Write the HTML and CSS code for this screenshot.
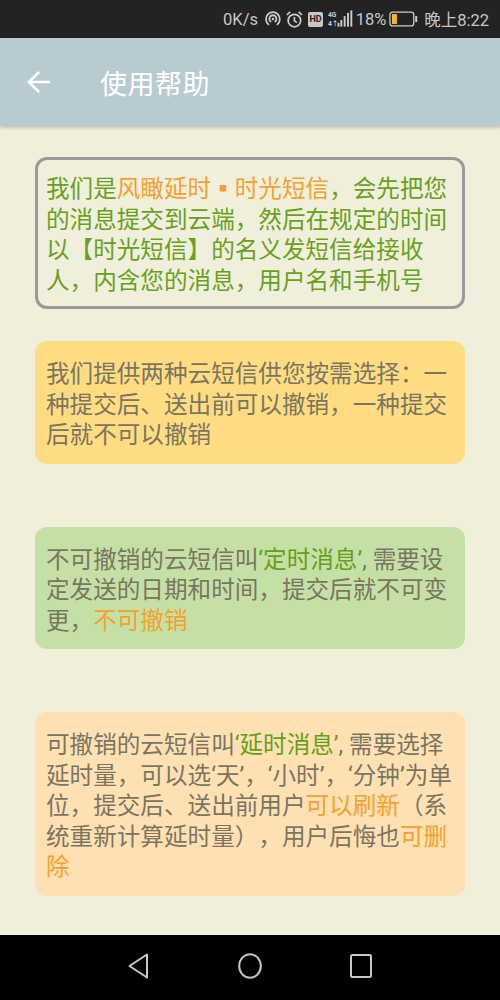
FILE: index.html
```html
<!DOCTYPE html>
<html lang="zh">
<head>
<meta charset="utf-8">
<title>使用帮助</title>
<link rel="stylesheet" href="styles.css">
</head>
<body>
<div class="screen">
  <header class="status">
    <span class="speed">0K/s</span>
    <svg class="ic-hotspot" viewBox="0 0 18 18"><path d="M4.5 14.5A7 7 0 1 1 13.5 14.5M6.6 11.5A3.6 3.6 0 1 1 11.4 11.5" fill="none" stroke="#ccc" stroke-width="1.8" stroke-linecap="round"/><circle cx="9" cy="9" r="1.3" fill="#ccc"/></svg>
    <svg class="ic-alarm" viewBox="0 0 18 18"><circle cx="9" cy="10" r="6" fill="none" stroke="#ccc" stroke-width="1.7"/><path d="M9 6.5V10.3L11.5 12M1.8 4.6L5 1.8M16.2 4.6L13 1.8" fill="none" stroke="#ccc" stroke-width="1.6"/></svg>
    <span class="hd">HD</span>
    <svg class="ic-signal" viewBox="0 0 26 20"><text x="0" y="7.5" class="sig-text">4G</text><text x="0" y="17" class="sig-text">4↑</text><rect x="10" y="14" width="2" height="4" fill="#ccc"/><rect x="13" y="11" width="2" height="7" fill="#ccc"/><rect x="16.5" y="7" width="2" height="11" fill="#ccc"/><rect x="20" y="3.500" width="2" height="14.500" fill="#ccc"/><rect x="23.500" y="1" width="2" height="17" fill="#ccc"/></svg>
    <span class="pct">18%</span>
    <svg class="ic-batt" viewBox="0 0 29 16"><rect x="1" y="1" width="24" height="14" rx="2.500" fill="none" stroke="#ccc" stroke-width="1.300"/><rect x="3" y="3" width="5" height="10" fill="#f5b921"/><rect x="26.500" y="5" width="2" height="6" fill="#ccc"/></svg>
    <span class="clock">晚上8:22</span>
  </header>
  <div class="appbar">
    <svg class="back" viewBox="0 0 24 24"><path d="M23 12H2.500M12 2L2 12L12 22" fill="none" stroke="#fff" stroke-width="2.500"/></svg>
    <h1 class="title">使用帮助</h1>
  </div>
  <main class="content">
    <section class="card card-intro">
      <p class="line">我们是<span class="orange">风瞰延时▪时光短信</span>，会先把您</p>
      <p class="line">的消息提交到云端，然后在规定的时间</p>
      <p class="line">以【时光短信】的名义发短信给接收</p>
      <p class="line">人，内含您的消息，用户名和手机号</p>
    </section>
    <section class="card card-yellow">
      <p class="line">我们提供两种云短信供您按需选择：一</p>
      <p class="line">种提交后、送出前可以撤销，一种提交</p>
      <p class="line">后就不可以撤销</p>
    </section>
    <section class="card card-green">
      <p class="line">不可撤销的云短信叫<span class="green">‘定时消息’</span>, 需要设</p>
      <p class="line">定发送的日期和时间，提交后就不可变</p>
      <p class="line">更，<span class="orange">不可撤销</span></p>
    </section>
    <section class="card card-peach">
      <p class="line">可撤销的云短信叫<span class="green">‘延时消息’</span>, 需要选择</p>
      <p class="line">延时量，可以选‘天’，‘小时’，‘分钟’为单</p>
      <p class="line">位，提交后、送出前用户<span class="orange">可以刷新</span>（系</p>
      <p class="line">统重新计算延时量），用户后悔也<span class="orange">可删</span></p>
      <p class="line"><span class="orange">除</span></p>
    </section>
  </main>
  <nav class="navbar">
    <svg class="nav-ic" viewBox="0 0 24 28"><path d="M20 2.500V25.500L2.500 14Z" fill="none" stroke="#c8c8c8" stroke-width="2" stroke-linejoin="round"/></svg>
    <svg class="nav-ic" viewBox="0 0 24 28"><ellipse cx="12" cy="14" rx="10.800" ry="11.800" fill="none" stroke="#c8c8c8" stroke-width="2"/></svg>
    <svg class="nav-ic" viewBox="0 0 24 28"><rect x="2" y="3" width="20" height="22" rx="1.500" fill="none" stroke="#c8c8c8" stroke-width="2"/></svg>
  </nav>
</div>
</body>
</html>
```
FILE: styles.css
```css
* { box-sizing: border-box; margin: 0; padding: 0; }
html, body { width: 500px; height: 1000px; overflow: hidden; }
body {
  font-family: Roboto, "Noto Sans CJK SC", sans-serif;
  background: #efefdc;
  text-spacing-trim: space-all;
}
.screen { display: flex; flex-direction: column; height: 1000px; }

.status {
  height: 38px;
  flex: none;
  background: #232323;
  color: #c8c8c8;
  display: flex;
  align-items: center;
  padding: 0 11px 0 223px;
  font-size: 16.5px;
}
.speed { width: 41px; }
.ic-hotspot { width: 18px; height: 18px; margin-right: 4px; }
.ic-alarm { width: 19px; height: 19px; margin-right: 4px; }
.hd {
  width: 15px; height: 15px;
  background: #c8c8c8; color: #232323;
  border-radius: 2px;
  font-size: 9px; font-weight: 700;
  display: flex; align-items: center; justify-content: center;
  margin-right: 5px;
}
.ic-signal { width: 25px; height: 20px; margin-right: 3px; }
.sig-text { font-size: 7px; font-weight: 700; fill: #ccc; }
.pct { width: 34px; }
.ic-batt { width: 29px; height: 16px; margin-right: 6px; }
.clock { white-space: nowrap; }

.appbar {
  height: 88px;
  flex: none;
  background: #b8cbd1;
  display: flex;
  align-items: center;
  padding-left: 27px;
  box-shadow: 0 2px 3px rgba(0, 0, 0, 0.18);
  position: relative;
}
.back { width: 24px; height: 24px; margin-right: 49px; }
.title {
  font-size: 27px;
  font-weight: 400;
  color: #fff;
  letter-spacing: 0.500px;
}

.content {
  flex: 1;
  display: flex;
  flex-direction: column;
  padding: 31px 35px 0;
}
.card {
  border-radius: 12px;
  padding: 18px 11px 13px;
  font-size: 23.600px;
  line-height: 30.500px;
  color: #7a7560;
}
.line { white-space: nowrap; height: 30.500px; }
.orange { color: #f5a02c; }
.green { color: #659f18; }

.card-intro {
  border: 3px solid #9a9a9a;
  padding: 14px 8px 10px;
  color: #6a9f20;
  margin-bottom: 32px;
}
.card-yellow { background: #ffdc82; margin-bottom: 63px; }
.card-green { background: #c5e0a5; margin-bottom: 63px; }
.card-peach { background: #ffe0b2; }

.navbar {
  height: 65px;
  flex: none;
  background: #000;
  display: flex;
  justify-content: center;
  align-items: center;
  gap: 87px;
  padding-bottom: 3px;
}
.nav-ic { width: 24px; height: 28px; }
```
